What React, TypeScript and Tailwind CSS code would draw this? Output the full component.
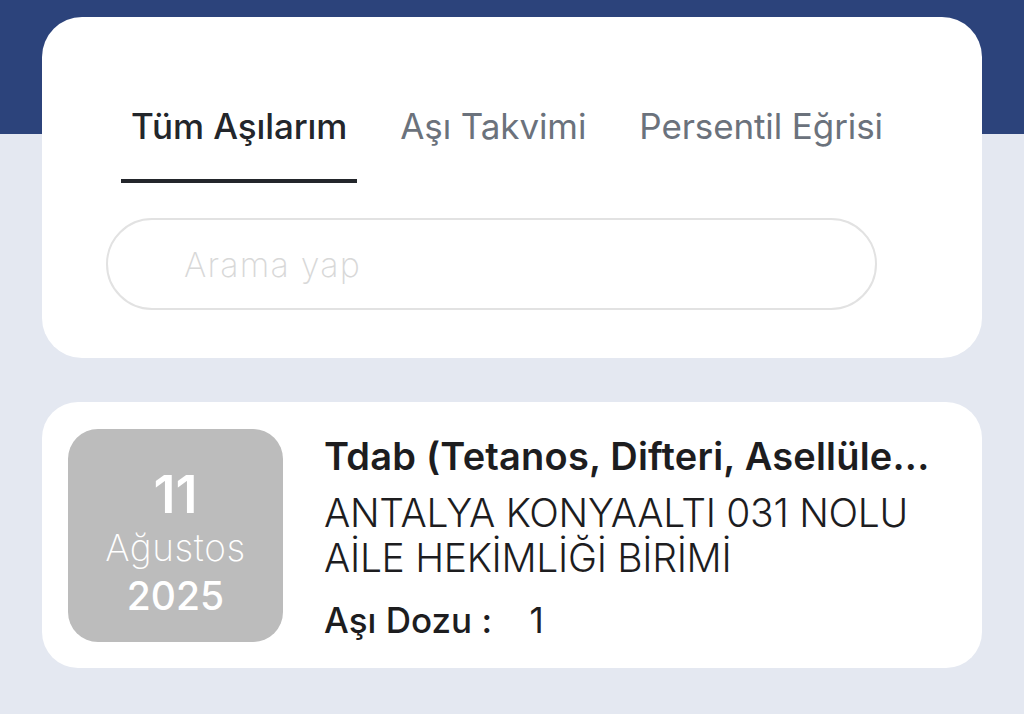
export default function App() {
  const tabs = ["Tüm Aşılarım", "Aşı Takvimi", "Persentil Eğrisi"];
  return (
    <main className="min-h-screen bg-[linear-gradient(#2c437b_134px,#e4e8f1_134px)] pt-[17px] font-['Inter',sans-serif]">
      {/* Header card with tabs + search */}
      <div className="mx-[42px] h-[341px] rounded-[40px] bg-white pt-[88px]">
        <div className="flex gap-[33px] pl-[79px]">
          {tabs.map((t, i) => (
            <div key={t} className="flex flex-col items-stretch">
              <span
                className={
                  "px-[10px] text-[35px] leading-[42px] tracking-[-0.1px] " +
                  (i === 0 ? "font-medium text-[#23262b]" : "text-[#6b727c]")
                }
              >
                {t}
              </span>
              <div className={"mt-[32px] h-[4px] " + (i === 0 ? "bg-[#23262b]" : "bg-transparent")} />
            </div>
          ))}
        </div>
        <div className="ml-[64px] mt-[35px] flex h-[92px] w-[771px] items-center rounded-full border-2 border-[#e2e2e2] pl-[76px]">
          <span className="text-[34px] font-extralight tracking-[1.2px] text-[#d8d8d8]">Arama yap</span>
        </div>
      </div>

      {/* Vaccine record */}
      <div className="mx-[42px] mt-[44px] flex h-[266px] items-center gap-[41px] rounded-[36px] bg-white pl-[26px] pr-[30px]">
        <div className="flex h-[213px] w-[215px] shrink-0 flex-col items-center justify-center rounded-[30px] bg-[#bcbcbc] pt-[17px] text-white">
          <span className="text-[52px] font-semibold leading-[56px]">11</span>
          <span className="mt-[4px] text-[37px] font-extralight leading-[42px] tracking-[0.6px]">Ağustos</span>
          <span className="mt-[3px] text-[39px] font-medium leading-[48px]">2025</span>
        </div>
        <div className="min-w-0 flex-1 pt-[6px] text-[#1d1d1f]">
          <div className="whitespace-nowrap text-[38px] font-semibold leading-[44px] tracking-[0.2px]">
            Tdab (Tetanos, Difteri, Asellüle...
          </div>
          <div className="mt-[12px] text-[39px] font-light leading-[45px] tracking-[-0.3px]">
            ANTALYA KONYAALTI 031 NOLU
            <br />
            AİLE HEKİMLİĞİ BİRİMİ
          </div>
          <div className="mt-[18px] text-[35px] font-medium leading-[44px]">
            Aşı Dozu :&nbsp;&nbsp;&nbsp; <span className="font-normal">1</span>
          </div>
        </div>
      </div>
    </main>
  );
}
